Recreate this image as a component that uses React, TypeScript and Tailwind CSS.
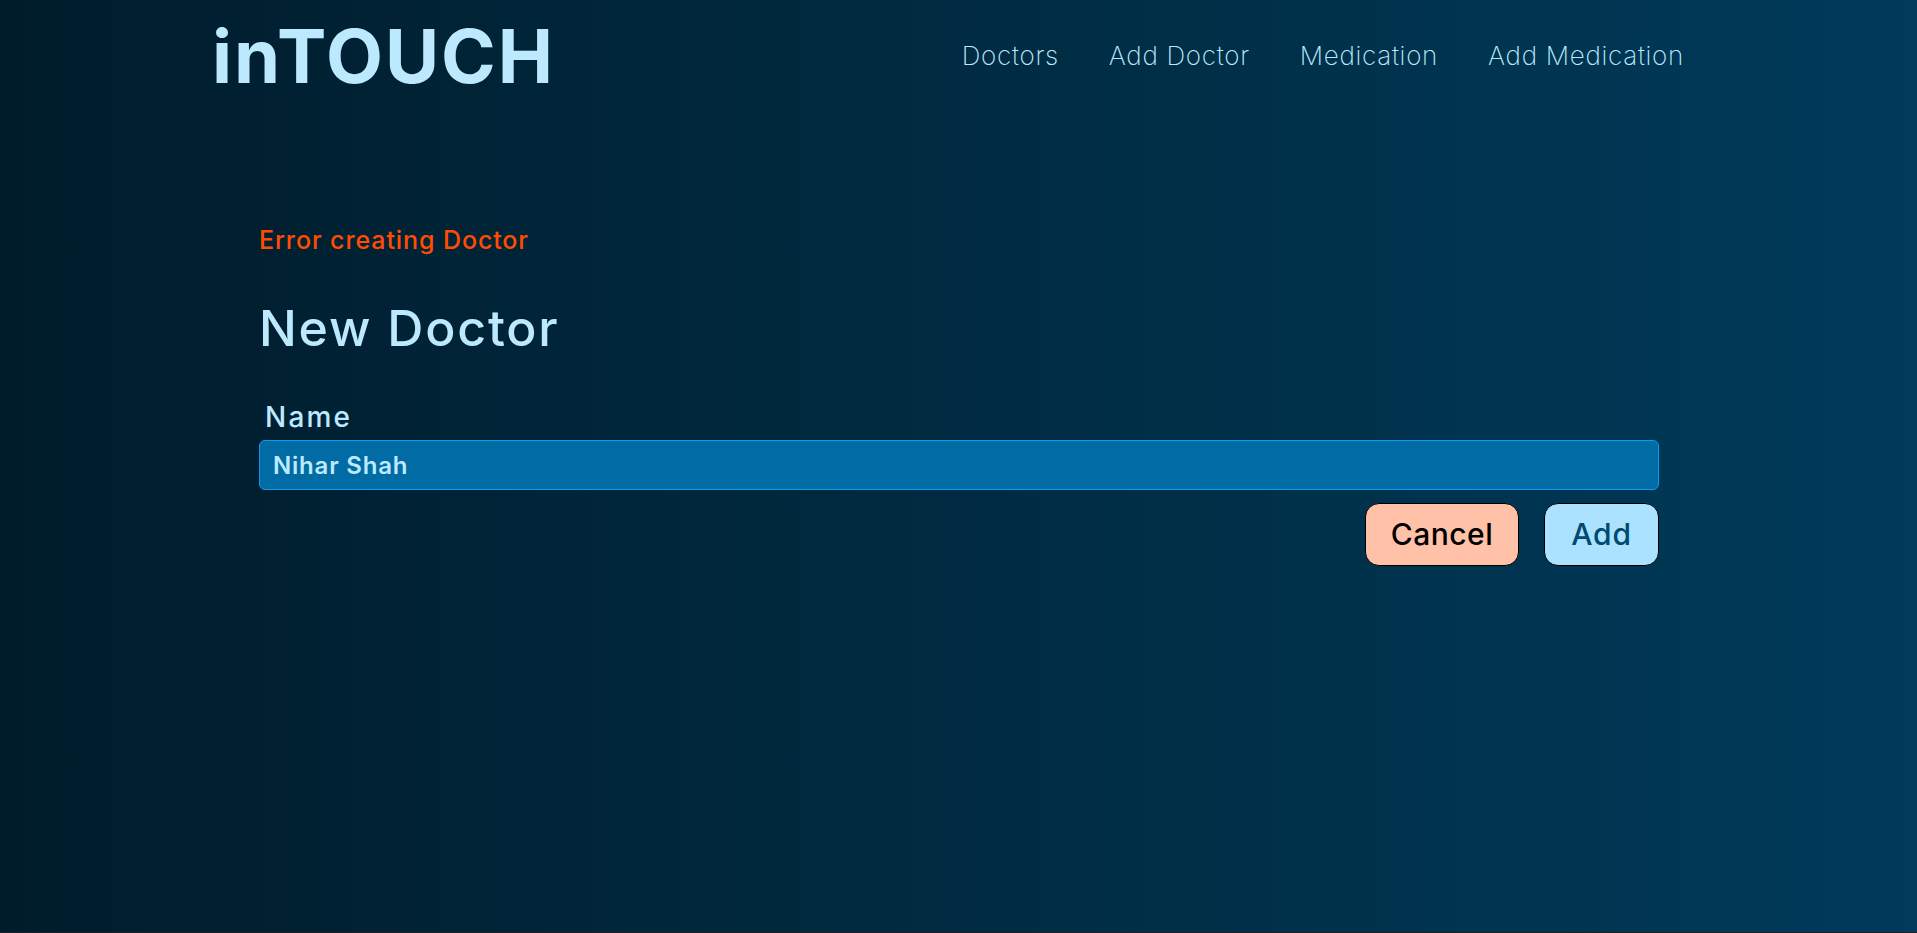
export default function App() {
  const navLinks = ['Doctors', 'Add Doctor', 'Medication', 'Add Medication'];

  return (
    <div className="h-[933px] overflow-hidden bg-gradient-to-r from-[#001c2b] to-[#003b5a] border-b border-[#1c2024] font-['Inter',sans-serif] text-[#bde9ff]">
      {/* Header */}
      <div className="flex items-center justify-between pl-[212px] pr-[233px] h-[111px]">
        <div className="text-[74px] leading-none font-bold tracking-[2px]">inTOUCH</div>
        <nav className="flex gap-[50px]">
          {navLinks.map((link) => (
            <a key={link} className="text-[26px] font-extralight tracking-[0.7px] text-[#bde9ff]">
              {link}
            </a>
          ))}
        </nav>
      </div>

      {/* Content */}
      <div className="ml-[259px] w-[1400px] pt-[114px]">
        <p className="text-[25px] leading-[30px] font-medium tracking-[0.9px] text-[#ff4c00]">Error creating Doctor</p>
        <h1 className="mt-[43px] text-[50px] leading-[60px] font-medium tracking-[1.8px]">New Doctor</h1>

        <form className="mt-[41px]">
          <label className="block pl-[6px] text-[28px] leading-[37px] font-medium tracking-[2.2px]">Name</label>
          <input
            readOnly
            value="Nihar Shah"
            className="mt-[4px] block w-full h-[50px] px-[13px] rounded-[6px] bg-[#016ba3] border border-[#0a9cf0] text-[24px] font-semibold tracking-[0.8px] text-[#bde9ff] outline-none"
          />
          <div className="mt-[13px] flex justify-end gap-[25px]">
            <button type="button" className="w-[154px] h-[63px] rounded-[14px] bg-[#ffc2a8] border border-black text-[30px] font-medium tracking-[0.5px] text-black">
              Cancel
            </button>
            <button type="button" className="w-[115px] h-[63px] rounded-[14px] bg-[#abe2ff] border border-black text-[30px] font-medium tracking-[0.8px] text-[#004a70]">
              Add
            </button>
          </div>
        </form>
      </div>
    </div>
  );
}
